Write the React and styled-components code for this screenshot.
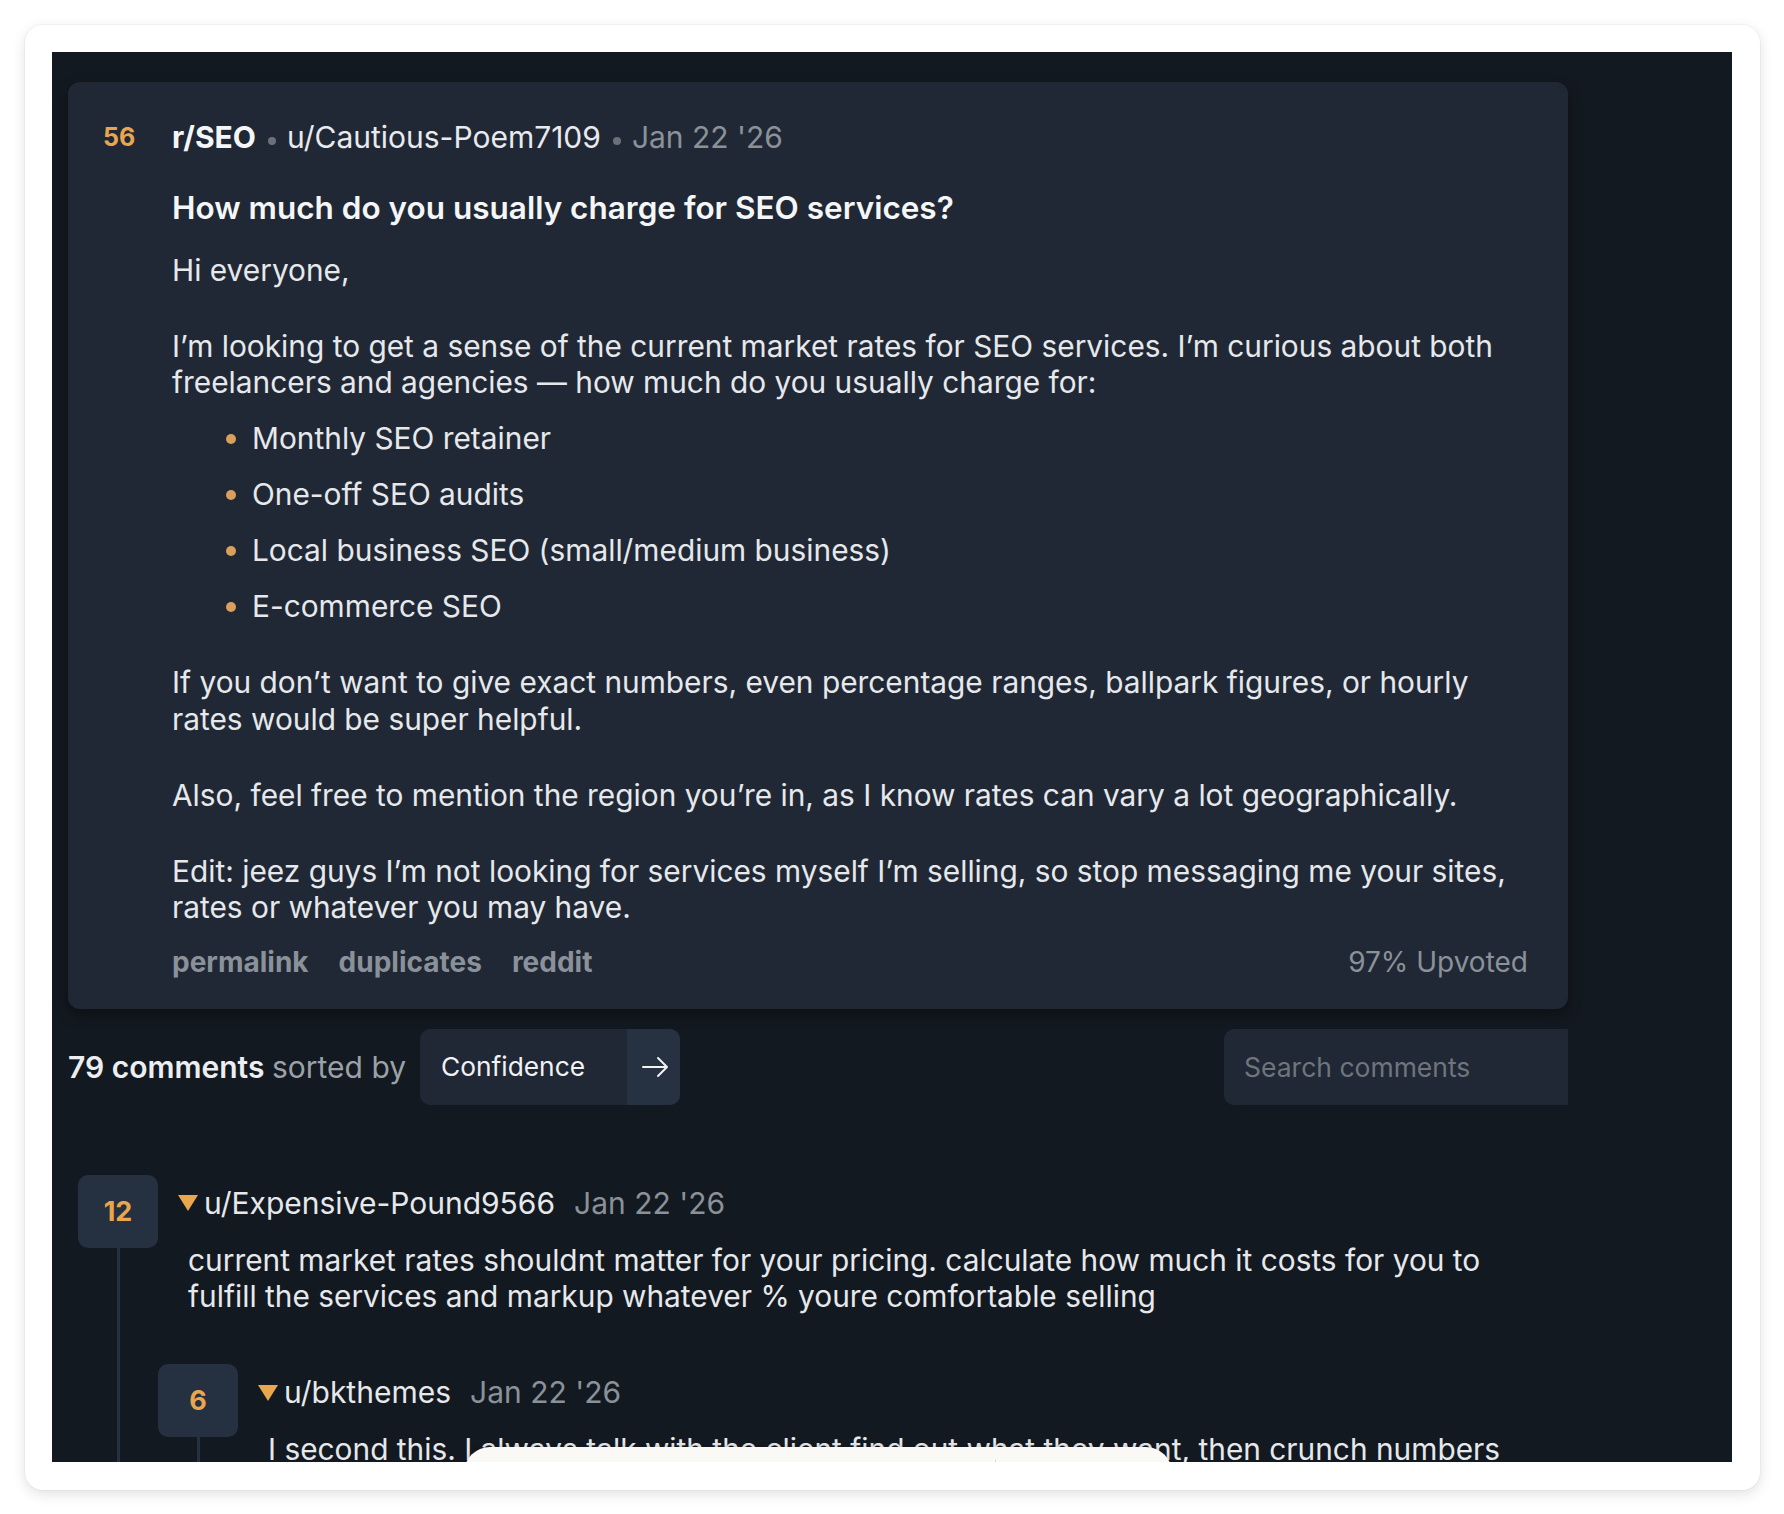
import React from "react";
import styled, { createGlobalStyle } from "styled-components";

const Global = createGlobalStyle`
  html, body { margin: 0; padding: 0; background: #ffffff; }
  body {
    font-family: Inter, "Noto Sans", "Liberation Sans", sans-serif;
    -webkit-font-smoothing: antialiased;
  }
  * { box-sizing: border-box; }
`;

const Frame = styled.div`
  margin: 25px 24px 24px 25px;
  width: 1735px;
  height: 1465px;
  padding: 27px 28px 28px 27px;
  background: #ffffff;
  border-radius: 18px;
  box-shadow: 0 4px 14px rgba(0, 0, 0, 0.12), 0 0 0 1px rgba(0, 0, 0, 0.03);
`;

const Screen = styled.div`
  position: relative;
  width: 1680px;
  height: 1410px;
  background: #131920;
  overflow: hidden;
  padding: 30px 0 0 16px;
`;

const Column = styled.main`
  width: 1500px;
`;

/* ---------- Post ---------- */
const PostCard = styled.article`
  display: flex;
  background: #202835;
  border-radius: 12px;
  padding: 36px 40px 28px 35px;
  box-shadow: 0 6px 14px rgba(0, 0, 0, 0.35);
`;

const PostScore = styled.div`
  width: 69px;
  flex-shrink: 0;
  font-size: 25px;
  font-weight: 700;
  line-height: 39px;
  color: #e8a64f;
`;

const PostMain = styled.div`
  flex: 1;
  min-width: 0;
`;

const MetaRow = styled.div`
  display: flex;
  align-items: center;
  font-size: 30px;
  line-height: 39px;
  color: #e8eaed;
`;

const Sub = styled.span`
  font-weight: 700;
  color: #f5f6f7;
`;

const Dot = styled.span`
  display: inline-block;
  width: 8px;
  height: 8px;
  border-radius: 50%;
  background: #6b7079;
  margin: 6px 11px 0 12px;
`;

const Muted = styled.span`
  color: #8b9199;
`;

const Title = styled.h1`
  margin: 30px 0 0;
  font-size: 31.5px;
  line-height: 41px;
  font-weight: 600;
  color: #f5f6f7;
`;

const Body = styled.div`
  margin-top: 24px;
  font-size: 29.85px;
  line-height: 36.4px;
  color: #e6e8eb;
`;

const Para = styled.p`
  margin: 0;
  & + & { margin-top: 39.6px; }
`;

const List = styled.ul`
  list-style: none;
  margin: 19.6px 0 39.6px 54px;
  padding: 0;
`;

const Item = styled.li`
  display: flex;
  align-items: center;
  gap: 16px;
  & + & { margin-top: 19.6px; }
  &::before {
    content: "";
    width: 10px;
    height: 10px;
    border-radius: 50%;
    background: #d9a05b;
    flex-shrink: 0;
  }
`;

const Footer = styled.div`
  display: flex;
  align-items: center;
  margin-top: 18.6px;
  font-size: 28px;
  line-height: 36.4px;
`;

const Links = styled.div`
  display: flex;
  gap: 30px;
`;

const FootLink = styled.a`
  font-weight: 700;
  color: #8b9199;
  text-decoration: none;
`;

const Ratio = styled.span`
  margin-left: auto;
  color: #8b9199;
`;

/* ---------- Comments bar ---------- */
const Bar = styled.div`
  display: flex;
  align-items: center;
  margin-top: 20px;
  height: 76px;
`;

const Count = styled.span`
  font-size: 30px;
  font-weight: 600;
  color: #eceef0;
  margin-right: 14px;
`;

const CountMuted = styled.span`
  font-weight: 400;
  color: #9ca1a8;
`;

const SortBox = styled.div`
  display: flex;
  height: 76px;
  border-radius: 10px;
  overflow: hidden;
  background: #202835;
`;

const SortLabel = styled.div`
  display: flex;
  align-items: center;
  width: 207px;
  padding: 0 21px;
  font-size: 26.3px;
  color: #f1f2f4;
`;

const SortArrow = styled.div`
  display: flex;
  align-items: center;
  justify-content: center;
  width: 53px;
  padding-left: 3px;
  background: #263142;
`;

const Search = styled.input`
  margin-left: auto;
  width: 344px;
  height: 76px;
  border: none;
  outline: none;
  background: #202835;
  border-radius: 10px 0 0 10px;
  padding: 0 20px;
  font-family: inherit;
  font-size: 26.5px;
  color: #e6e8eb;
  &::placeholder { color: #6f757d; }
`;

/* ---------- Comments ---------- */
const CommentList = styled.section`
  margin-top: 70px;
  padding-left: 10px;
`;

const CommentGrid = styled.div`
  display: grid;
  grid-template-columns: 80px 1fr;
  column-gap: 20px;
`;

const Rail = styled.div`
  display: flex;
  flex-direction: column;
  align-items: center;
`;

const VoteBox = styled.div`
  width: 80px;
  height: 73px;
  flex-shrink: 0;
  border-radius: 10px;
  background: #253040;
  display: flex;
  align-items: center;
  justify-content: center;
  font-size: 27px;
  font-weight: 700;
  color: #e8a64f;
`;

const Thread = styled.div`
  width: 3px;
  flex: 1;
  background: #253040;
`;

const CommentMain = styled.div`
  padding-top: 9px;
  min-width: 0;
`;

const CommentHead = styled.div`
  display: flex;
  align-items: center;
  font-size: 30px;
  line-height: 39px;
`;

const Caret = styled.svg`
  width: 20px;
  height: 16px;
  margin-right: 6px;
  flex-shrink: 0;
`;

const Author = styled.span`
  color: #e6e8eb;
`;

const When = styled.span`
  margin-left: 19px;
  color: #8b9199;
`;

const CommentText = styled.p`
  margin: 19px 0 0;
  padding: 0 40px 0 10px;
  font-size: 29.85px;
  line-height: 36.4px;
  color: #e6e8eb;
`;

const Replies = styled.div`
  margin: 50px 0 0 -20px;
`;

/* ---------- Dock peeking from bottom ---------- */
const Dock = styled.div`
  position: absolute;
  left: 412px;
  bottom: -40px;
  width: 708px;
  height: 55px;
  background: #faf9f5;
  border-radius: 26px;
  box-shadow: 0 -1px 4px rgba(0, 0, 0, 0.15);
  display: flex;
  padding: 13px 0 0 531px;
`;

const DockDivider = styled.div`
  width: 1px;
  height: 22px;
  background: #d8d6cf;
`;

function Comment({ score, author, date, text, children }) {
  return (
    <CommentGrid>
      <Rail>
        <VoteBox>{score}</VoteBox>
        <Thread />
      </Rail>
      <CommentMain>
        <CommentHead>
          <Caret viewBox="0 0 20 16">
            <polygon points="0,0 20,0 10,16" fill="#e8a64f" />
          </Caret>
          <Author>{author}</Author>
          <When>{date}</When>
        </CommentHead>
        <CommentText>{text}</CommentText>
        {children && <Replies>{children}</Replies>}
      </CommentMain>
    </CommentGrid>
  );
}

export default function App() {
  return (
    <>
      <Global />
      <Frame>
        <Screen>
          <Column>
            <PostCard>
              <PostScore>56</PostScore>
              <PostMain>
                <MetaRow>
                  <Sub>r/SEO</Sub>
                  <Dot />
                  <span>u/Cautious-Poem7109</span>
                  <Dot />
                  <Muted>Jan 22 '26</Muted>
                </MetaRow>
                <Title>How much do you usually charge for SEO services?</Title>
                <Body>
                  <Para>Hi everyone,</Para>
                  <Para>
                    I’m looking to get a sense of the current market rates for SEO services. I’m curious about both
                    freelancers and agencies — how much do you usually charge for:
                  </Para>
                  <List>
                    <Item>Monthly SEO retainer</Item>
                    <Item>One-off SEO audits</Item>
                    <Item>Local business SEO (small/medium business)</Item>
                    <Item>E-commerce SEO</Item>
                  </List>
                  <Para>
                    If you don’t want to give exact numbers, even percentage ranges, ballpark figures, or hourly
                    rates would be super helpful.
                  </Para>
                  <Para>
                    Also, feel free to mention the region you’re in, as I know rates can vary a lot geographically.
                  </Para>
                  <Para>
                    Edit: jeez guys I’m not looking for services myself I’m selling, so stop messaging me your sites,
                    rates or whatever you may have.
                  </Para>
                </Body>
                <Footer>
                  <Links>
                    <FootLink href="#">permalink</FootLink>
                    <FootLink href="#">duplicates</FootLink>
                    <FootLink href="#">reddit</FootLink>
                  </Links>
                  <Ratio>97% Upvoted</Ratio>
                </Footer>
              </PostMain>
            </PostCard>

            <Bar>
              <Count>
                79 comments <CountMuted>sorted by</CountMuted>
              </Count>
              <SortBox>
                <SortLabel>Confidence</SortLabel>
                <SortArrow>
                  <svg width="27" height="22" viewBox="0 0 27 22" fill="none">
                    <path d="M1 11h24M16 2l9 9-9 9" stroke="#f1f2f4" strokeWidth="2" strokeLinecap="round" strokeLinejoin="round" />
                  </svg>
                </SortArrow>
              </SortBox>
              <Search placeholder="Search comments" />
            </Bar>

            <CommentList>
              <Comment
                score="12"
                author="u/Expensive-Pound9566"
                date="Jan 22 '26"
                text="current market rates shouldnt matter for your pricing. calculate how much it costs for you to fulfill the services and markup whatever % youre comfortable selling"
              >
                <Comment
                  score="6"
                  author="u/bkthemes"
                  date="Jan 22 '26"
                  text="I second this. I always talk with the client find out what they want, then crunch numbers based on the work involved."
                />
              </Comment>
            </CommentList>
          </Column>
          <Dock>
            <DockDivider />
          </Dock>
        </Screen>
      </Frame>
    </>
  );
}
